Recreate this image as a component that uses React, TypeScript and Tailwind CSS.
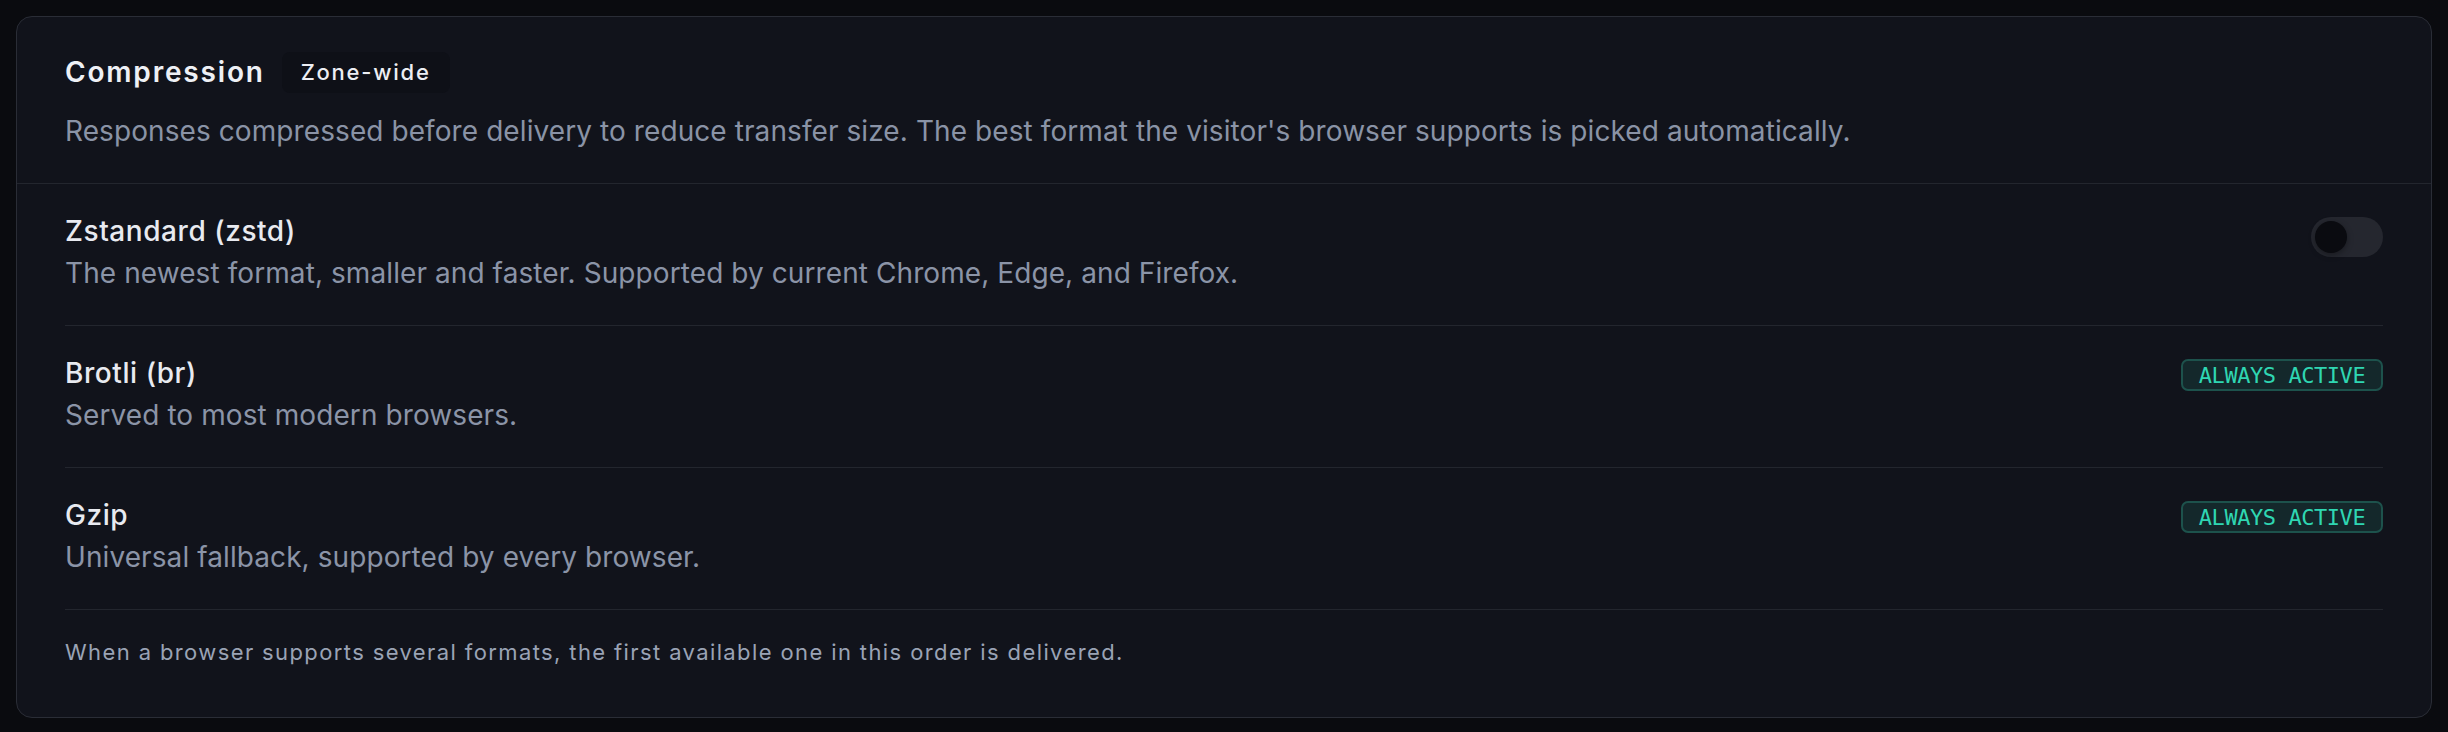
import React from "react";

type Format = {
  name: string;
  desc: string;
  kind: "toggle" | "always";
};

const formats: Format[] = [
  {
    name: "Zstandard (zstd)",
    desc: "The newest format, smaller and faster. Supported by current Chrome, Edge, and Firefox.",
    kind: "toggle",
  },
  { name: "Brotli (br)", desc: "Served to most modern browsers.", kind: "always" },
  { name: "Gzip", desc: "Universal fallback, supported by every browser.", kind: "always" },
];

const Toggle = () => (
  <button
    type="button"
    role="switch"
    aria-checked={false}
    className="mt-[7px] flex h-[40px] w-[72px] shrink-0 items-center rounded-full bg-[#25272f] p-[4px]"
  >
    <span className="block h-[32px] w-[32px] rounded-full bg-[#0a0b10] shadow-[0_2px_6px_rgba(0,0,0,0.35)]" />
  </button>
);

const AlwaysActive = () => (
  <span className="mt-[7px] flex h-[32px] w-[202px] shrink-0 items-center justify-center rounded-[7px] border-2 border-[#1d524c] bg-[#14282b] font-['DejaVu_Sans_Mono',monospace] text-[22px] tracking-[-0.02em] text-[#2fd6b2]">
    ALWAYS ACTIVE
  </span>
);

export default function App() {
  return (
    <div className="min-h-screen bg-[#0a0b0f] p-4 font-['Inter',sans-serif]">
      <div className="rounded-2xl border border-[#2a2d36] bg-[#11131b]">
        <div className="px-12 pt-[35px] pb-[31px]">
          <div className="flex items-center gap-[17px]">
            <h2 className="text-[28px] font-semibold leading-[41px] tracking-[0.065em] text-[#eef0f5]">
              Compression
            </h2>
            <span className="flex h-[41px] items-center rounded-lg bg-[#0e1017] px-[19px] text-[22px] font-medium tracking-[0.08em] text-[#eceef3]">
              Zone-wide
            </span>
          </div>
          <p className="mt-[17px] text-[28px] leading-[42px] tracking-[0.003em] text-[#8a93a6]">
            Responses compressed before delivery to reduce transfer size. The best format the visitor's browser supports is picked automatically.
          </p>
        </div>

        <div className="border-t border-[#23262e] px-12 pb-12">
          {formats.map((f) => (
            <div
              key={f.name}
              className="flex items-start justify-between border-b border-[#23262e] pt-[26px] pb-[31px]"
            >
              <div>
                <div className="text-[28px] font-medium leading-[42px] tracking-[0.02em] text-[#e8eaf0]">
                  {f.name}
                </div>
                <div className="text-[28px] leading-[42px] tracking-[0.003em] text-[#8b94a7]">{f.desc}</div>
              </div>
              {f.kind === "toggle" ? <Toggle /> : <AlwaysActive />}
            </div>
          ))}
          <p className="mt-[25px] text-[22px] leading-[34px] tracking-[0.063em] text-[#9aa3b5]">
            When a browser supports several formats, the first available one in this order is delivered.
          </p>
        </div>
      </div>
    </div>
  );
}
